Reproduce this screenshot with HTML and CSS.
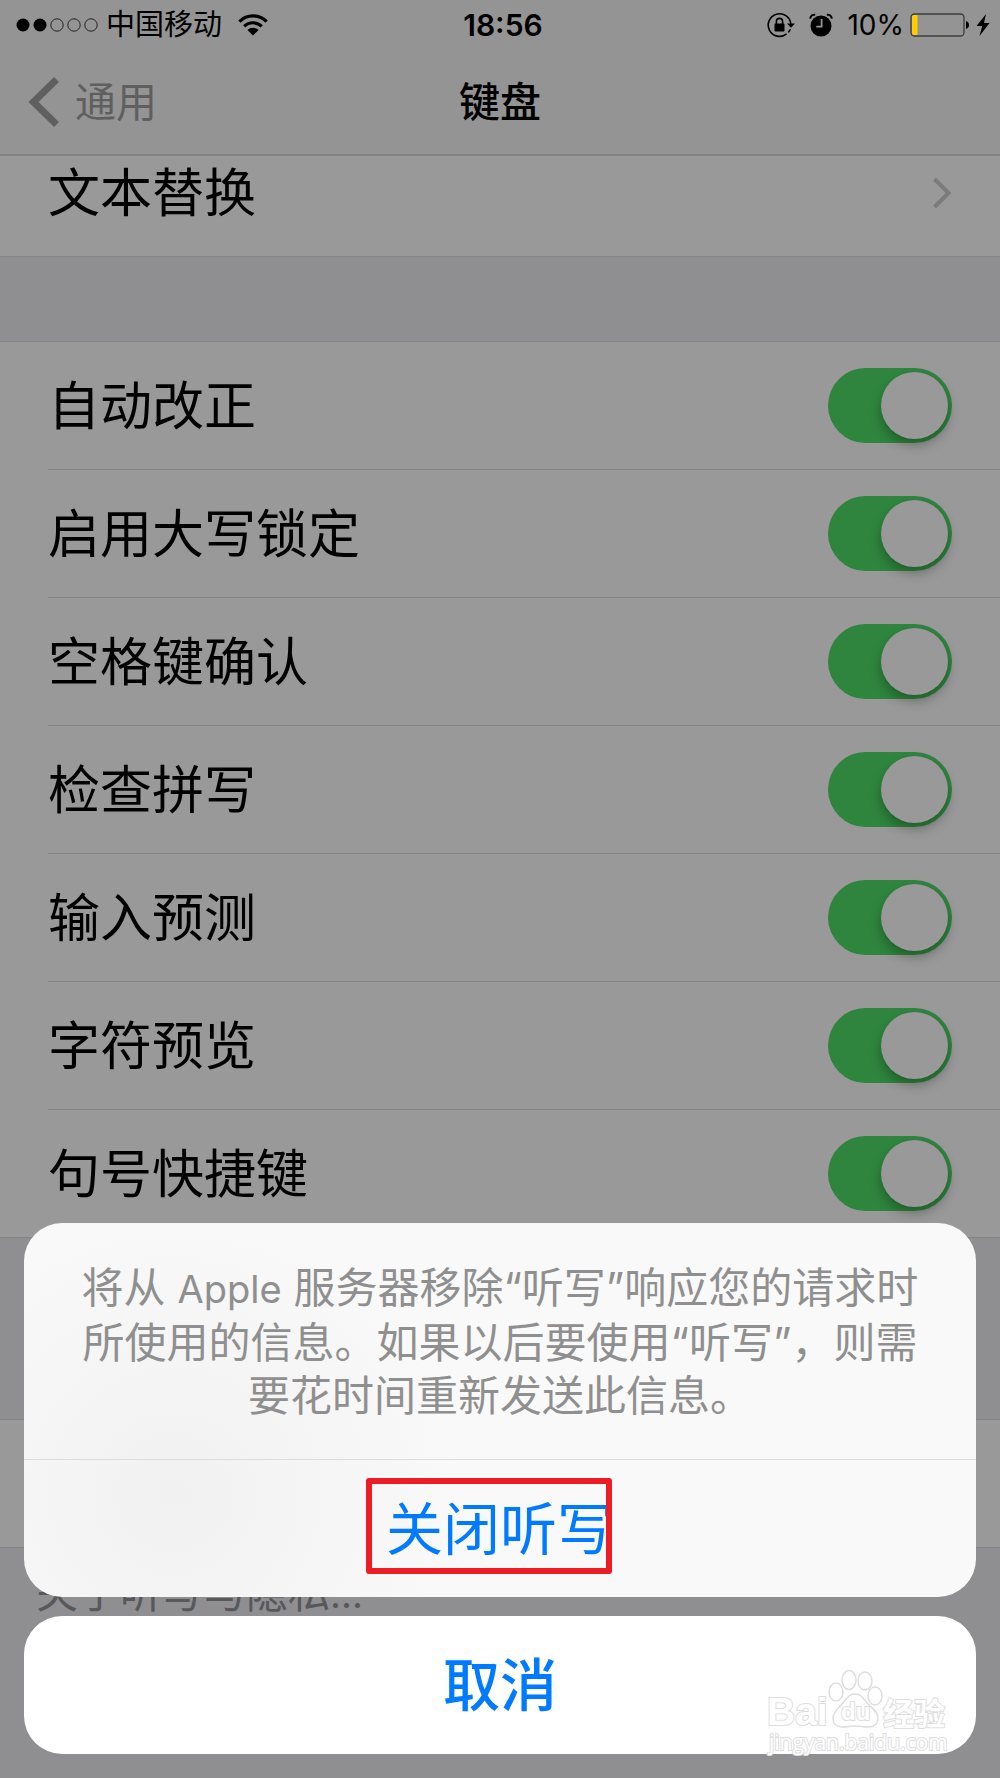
FILE: index.html
```html
<!DOCTYPE html>
<html lang="zh-CN">
<head>
<meta charset="utf-8">
<meta name="viewport" content="width=device-width, initial-scale=1">
<title>键盘</title>
<link rel="stylesheet" href="styles.css">
</head>
<body>
<div class="screen">
  <header class="header">
    <div class="status">
      <div class="status-left">
        <svg class="signal" width="82" height="14" viewBox="0 0 82 14" aria-hidden="true">
          <circle cx="7" cy="7" r="6.5"/><circle cx="24" cy="7" r="6.5"/>
          <g fill="none" stroke="#222" stroke-width="1"><circle cx="41" cy="7" r="6.2"/><circle cx="58" cy="7" r="6.2"/><circle cx="75" cy="7" r="6.2"/></g>
        </svg>
        <span class="carrier">中国移动</span>
        <svg class="wifi" width="30" height="22" viewBox="0 0 30 22" aria-hidden="true">
          <g fill="none" stroke="#000" stroke-width="3.2"><path d="M1.4 7.6a19.2 19.2 0 0 1 27.2 0"/><path d="M6.2 12.4a12.4 12.4 0 0 1 17.6 0"/></g>
          <path d="M15 21.6 9.4 16a7.9 7.9 0 0 1 11.2 0z"/>
        </svg>
      </div>
      <time class="clock">18:56</time>
      <div class="status-right">
        <svg width="28" height="26" viewBox="0 0 28 26" aria-hidden="true">
          <path d="M19.6 21.9A11.3 11.3 0 1 1 23.8 12" fill="none" stroke="#000" stroke-width="1.6"/>
          <path d="M23.3 17.2a11.3 11.3 0 0 1-2 3.2" fill="none" stroke="#000" stroke-width="1.6"/>
          <path d="M20 11.5h8l-4 4.2z"/>
          <rect x="7.5" y="11.5" width="10" height="8" rx="1"/>
          <path d="M9.4 12V9.5a3.1 3.1 0 0 1 6.2 0V12" fill="none" stroke="#000" stroke-width="1.6"/>
        </svg>
        <svg class="alarm" width="24" height="24" viewBox="0 0 24 24" aria-hidden="true">
          <circle cx="12" cy="13" r="10.5"/>
          <path d="M1.2 5.6C1.4 3 3.5 1.3 6.2 1.8M22.8 5.6C22.6 3 20.5 1.3 17.8 1.8" fill="none" stroke="#000" stroke-width="2"/>
          <path d="M12.6 6v7.7H7.3" fill="none" stroke="#949494" stroke-width="1.8"/>
        </svg>
        <span class="percent">10%</span>
        <svg width="60" height="24" viewBox="0 0 60 24" aria-hidden="true">
          <rect x="1" y="1" width="53" height="22" rx="3.5" fill="none" stroke="#3c3c3c" stroke-width="1.3"/>
          <path d="M4 2h3.5v20H4a2 2 0 0 1-2-2V4a2 2 0 0 1 2-2z" fill="#fc0"/>
          <path d="M56 8c4 1.2 4 6.8 0 8z"/>
        </svg>
        <svg class="bolt" width="14" height="24" viewBox="0 0 14 24" aria-hidden="true"><path d="M10 1 .5 13h5.7L3.5 23 13.5 10H8z"/></svg>
      </div>
    </div>
    <nav class="nav">
      <a class="back" href="#general">
        <svg width="32" height="52" viewBox="0 0 32 52" aria-hidden="true"><path d="M28.5 3.5 5.5 26l23 22.5" fill="none" stroke="#5f5f5f" stroke-width="7"/></svg>
        <span class="text">通用</span>
      </a>
      <h1 class="title text">键盘</h1>
    </nav>
  </header>

  <main class="content">
    <section class="list list-first">
      <a class="row" href="#replace"><span class="cell"><span class="text">文本替换</span>
        <svg width="20" height="32" viewBox="0 0 20 32" aria-hidden="true"><path d="M2.5 2 16.5 16l-14 14" fill="none" stroke="#7b7b7e" stroke-width="4"/></svg></span></a>
    </section>
    <section class="list">
      <label class="row"><span class="cell"><span class="text">自动改正</span><input class="toggle" type="checkbox" checked></span></label>
      <label class="row"><span class="cell"><span class="text">启用大写锁定</span><input class="toggle" type="checkbox" checked></span></label>
      <label class="row"><span class="cell"><span class="text">空格键确认</span><input class="toggle" type="checkbox" checked></span></label>
      <label class="row"><span class="cell"><span class="text">检查拼写</span><input class="toggle" type="checkbox" checked></span></label>
      <label class="row"><span class="cell"><span class="text">输入预测</span><input class="toggle" type="checkbox" checked></span></label>
      <label class="row"><span class="cell"><span class="text">字符预览</span><input class="toggle" type="checkbox" checked></span></label>
      <label class="row"><span class="cell"><span class="text">句号快捷键</span><input class="toggle" type="checkbox" checked></span></label>
    </section>
    <section class="list list-last"><div class="row"></div></section>
    <a class="footnote" href="#privacy">关于听写与隐私<span class="latin">...</span></a>
  </main>

  <div class="sheet" role="dialog" aria-labelledby="message">
    <div class="panel">
      <p class="message" id="message">将从 <span class="latin">Apple</span> 服务器移除“听写”响应您的请求时<br>所使用的信息。如果以后要使用“听写”，则需<br>要花时间重新发送此信息。</p>
      <button class="action" type="button">关闭听写<span class="marker"></span></button>
    </div>
    <button class="panel cancel" type="button">取消</button>
  </div>

  <svg class="watermark" width="184" height="100" viewBox="0 0 184 100" aria-label="Baidu 经验">
    <g fill="#fff" stroke="#dedede" stroke-width="1.5">
      <ellipse cx="72" cy="32" rx="7" ry="9"/>
      <ellipse cx="85" cy="20" rx="7" ry="9.5"/>
      <ellipse cx="101" cy="21" rx="7" ry="9"/>
      <ellipse cx="111" cy="36" rx="7" ry="9"/>
      <path d="M91 34c7 0 9 6 13 10 5 5 10 8 10 14 0 7-5 9-10 9-5 0-8-1-13-1s-8 1-13 1c-5 0-9-3-9-9s5-9 9-14c4-4 6-10 13-10z"/>
    </g>
    <g class="mark">
      <text x="3" y="65" class="mark-logo">Bai</text>
      <text x="77" y="60" class="mark-du">du</text>
      <text x="119" y="65" class="mark-cn">经验</text>
      <text x="5" y="90" class="mark-url">jingyan.baidu.com</text>
    </g>
  </svg>
</div>
</body>
</html>
```
FILE: styles.css
```css
* { box-sizing: border-box; }

body {
  margin: 0;
  background: #8f8f92;
  color: #000;
  font-family: Inter, "Noto Sans CJK SC", sans-serif;
}

a { color: inherit; text-decoration: none; }

/* CJK glyphs sit low in their line box; this centres them optically */
.text { padding-bottom: 6px; }

.screen {
  position: relative;
  min-height: 100vh;
  overflow: hidden;
}

/* Header */
.header {
  position: relative;
  z-index: 1;
  background: #949494;
  border-bottom: 2px solid #838383;
}

.status {
  display: grid;
  grid-template-columns: 1fr auto 1fr;
  align-items: center;
  height: 50px;
  padding: 0 10px 0 16px;
  font-size: 28px;
}

.status-left,
.status-right { display: flex; align-items: center; }
.status-left { gap: 8px; }
.status-right { justify-content: flex-end; gap: 6px; }
.carrier { font-size: 29px; line-height: 40px; }
.wifi { margin-left: 8px; }
.alarm { margin: 0 8px; }
.clock { font-size: 30px; font-weight: 600; }

.nav {
  display: grid;
  grid-template-columns: 1fr auto 1fr;
  align-items: center;
  height: 104px;
  padding: 0 28px;
  font-size: 41px;
}

.back {
  display: flex;
  align-items: center;
  gap: 15px;
  color: #5f5f5f;
}

.title { margin: 0; font-size: 41px; font-weight: 500; }

/* Lists */
.list {
  margin-top: 84px;
  border-top: 1px solid #838385;
  background: #999;
}

.list-first { margin-top: -28px; }
.list-last { margin-top: 181px; }

.row {
  display: block;
  height: 128px;
  padding-left: 48px;
  font-size: 52px;
}

.cell {
  display: flex;
  align-items: center;
  justify-content: space-between;
  height: 100%;
  padding-right: 48px;
  border-bottom: 1px solid #838385;
}

.row:last-child {
  padding-left: 0;
  border-bottom: 1px solid #838385;
}

.row:last-child .cell { padding-left: 48px; border-bottom: 0; }

.toggle {
  appearance: none;
  width: 124px;
  height: 75px;
  margin: 0;
  padding: 4px;
  border-radius: 38px;
  background: #767678;
}

.toggle::before {
  content: "";
  display: block;
  width: 67px;
  height: 67px;
  border-radius: 50%;
  background: #999;
  box-shadow: 0 6px 12px rgba(0, 0, 0, 0.3);
}

.toggle:checked { background: #2f853e; }
.toggle:checked::before { margin-left: auto; }

.footnote {
  display: block;
  padding: 16px 36px;
  color: #58585b;
  font-size: 42px;
  line-height: 58px;
}

/* Action sheet */
.sheet {
  position: absolute;
  inset: auto 24px 24px;
  z-index: 2;
  display: grid;
  gap: 19px;
}

.panel {
  border-radius: 38px;
  background: radial-gradient(circle 280px at 150px 270px, #f1f1f2, #f9f9f9);
  overflow: hidden;
}

.message {
  margin: 0;
  padding: 38px 48px 37px;
  color: #8f8f8f;
  font-size: 42px;
  line-height: 53px;
  text-align: center;
  white-space: nowrap;
}

.latin { font-size: 38px; }

.action,
.cancel {
  width: 100%;
  height: 138px;
  padding: 0 0 8px;
  border: 0;
  color: #007aff;
  font-family: inherit;
  font-size: 57px;
}

.action {
  position: relative;
  border-top: 1px solid #dcdcde;
  background: transparent;
}

.cancel { background: #fff; font-weight: 500; }

.marker {
  position: absolute;
  top: 18px;
  left: calc(50% - 134px);
  width: 246px;
  height: 96px;
  border: 6px solid #ee1c25;
  border-radius: 3px;
}

/* Watermark */
.watermark {
  position: absolute;
  right: 52px;
  bottom: 18px;
  z-index: 3;
}

.mark {
  fill: #fff;
  stroke: #dedede;
  stroke-width: 2px;
  paint-order: stroke;
}

.mark-logo { font: 700 39px "Liberation Sans", sans-serif; }
.mark-du { font: 700 24px "Liberation Sans", sans-serif; }
.mark-cn { font: 700 31px "Noto Sans CJK SC", sans-serif; }
.mark-url { font: 400 21px "Open Sans", sans-serif; }
```
